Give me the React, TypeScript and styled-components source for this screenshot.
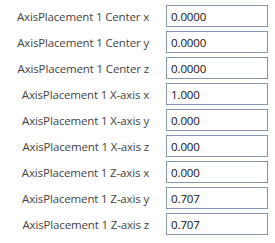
import React from "react";
import styled, { createGlobalStyle } from "styled-components";

const Global = createGlobalStyle`
  html, body { margin: 0; padding: 0; background: #ffffff; }
`;

const Panel = styled.div`
  display: grid;
  grid-template-columns: 149px 102px;
  column-gap: 17px;
  row-gap: 4px;
  padding-top: 5px;
  font-family: "Open Sans", "Noto Sans", sans-serif;
`;

const Label = styled.div`
  height: 22px;
  display: flex;
  align-items: center;
  justify-content: flex-end;
  font-size: 11.5px;
  letter-spacing: -0.15px;
  color: #444444;
  white-space: nowrap;
`;

const Field = styled.div`
  box-sizing: border-box;
  height: 22px;
  border: 1px solid #8597b0;
  display: flex;
  align-items: center;
  padding-left: 4px;
  font-size: 11.5px;
  letter-spacing: -0.1px;
  color: #111111;
`;

const rows: [string, string][] = [
  ["AxisPlacement 1 Center x", "0.0000"],
  ["AxisPlacement 1 Center y", "0.0000"],
  ["AxisPlacement 1 Center z", "0.0000"],
  ["AxisPlacement 1 X-axis x", "1.000"],
  ["AxisPlacement 1 X-axis y", "0.000"],
  ["AxisPlacement 1 X-axis z", "0.000"],
  ["AxisPlacement 1 Z-axis x", "0.000"],
  ["AxisPlacement 1 Z-axis y", "0.707"],
  ["AxisPlacement 1 Z-axis z", "0.707"],
];

export default function App() {
  return (
    <>
      <Global />
      <Panel>
        {rows.map(([l, v]) => (
          <React.Fragment key={l}>
            <Label>{l}</Label>
            <Field>{v}</Field>
          </React.Fragment>
        ))}
      </Panel>
    </>
  );
}
